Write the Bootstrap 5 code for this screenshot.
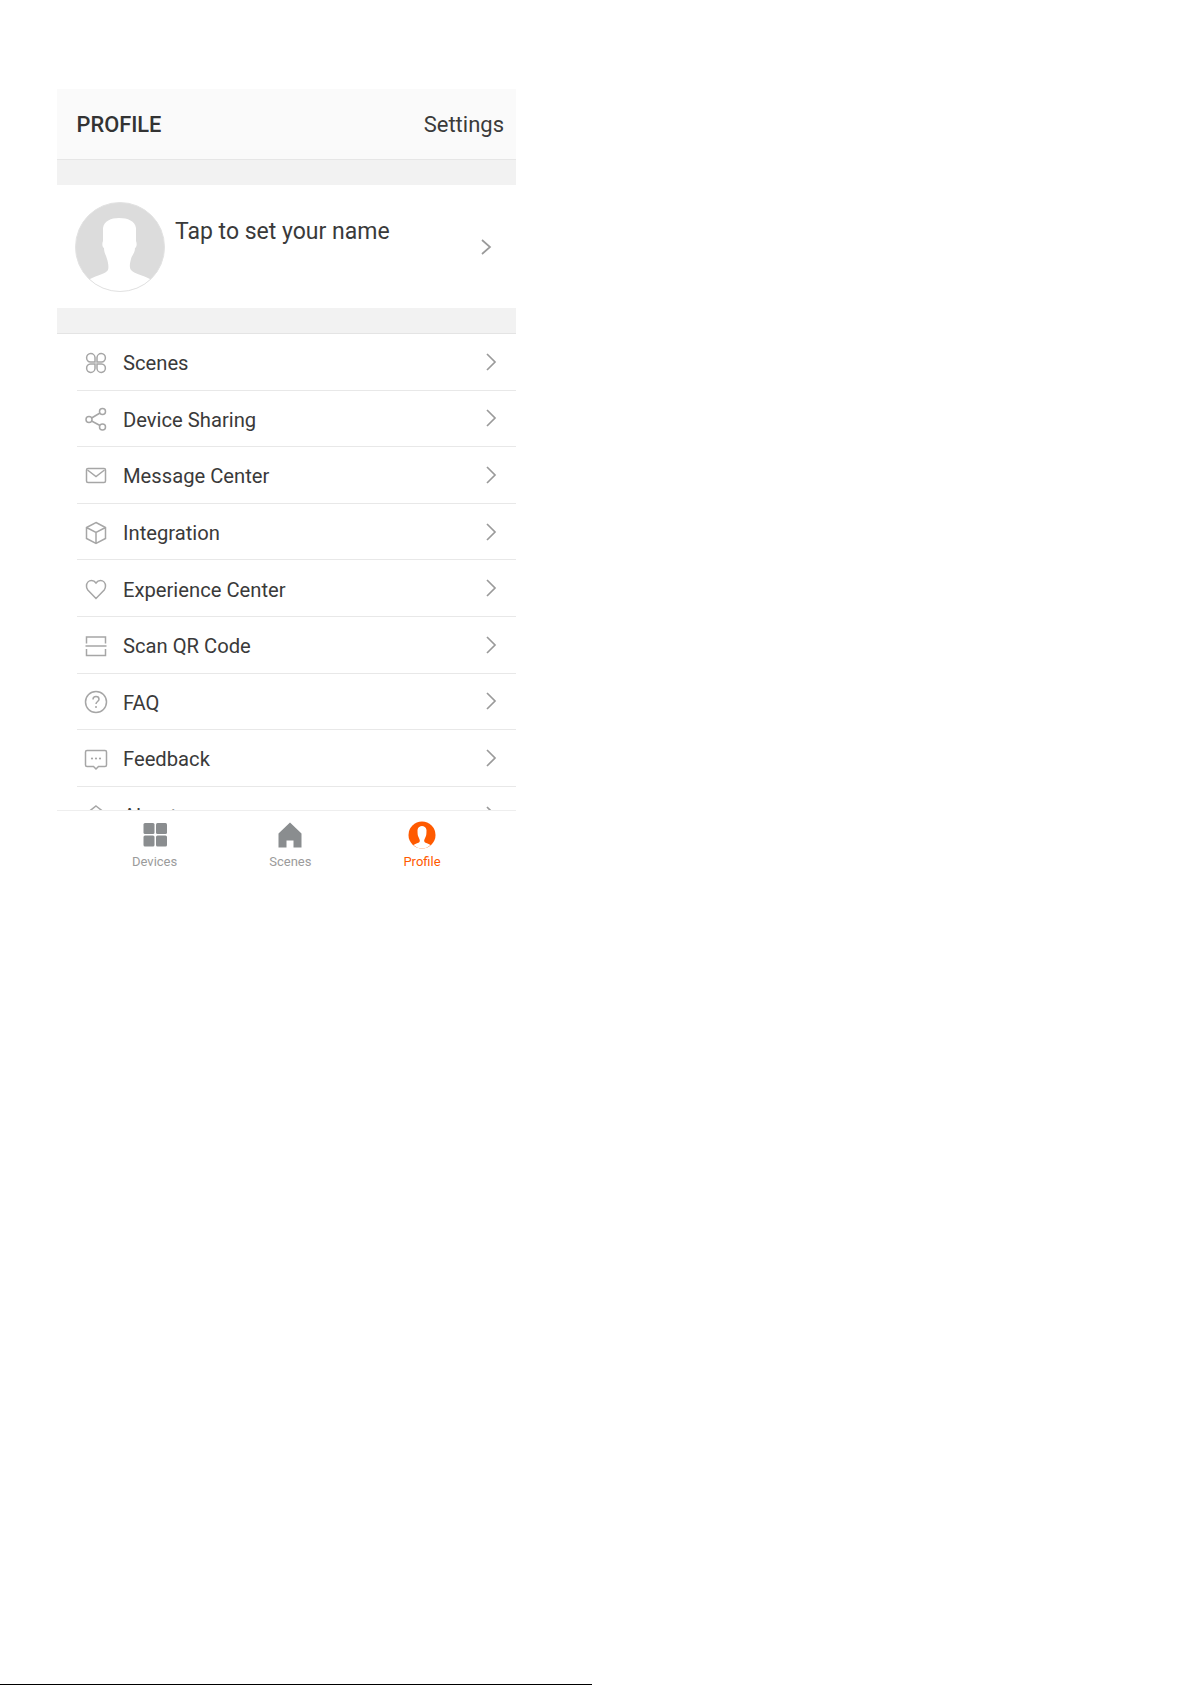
<!DOCTYPE html>
<html lang="en">
<head>
<meta charset="utf-8">
<title>Profile</title>
<link href="https://cdn.jsdelivr.net/npm/bootstrap@5.3.0/dist/css/bootstrap.min.css" rel="stylesheet">
<style>
html,body{margin:0;background:#fff}
body{font-family:Roboto,"Liberation Sans",sans-serif;color:#333}
.page-wrap{height:1685px;overflow:hidden}
.phone{width:459px;margin:89px 0 0 57px}
.app-head{height:71px;background:#fafafa;border-bottom:1px solid #e6e6e6;padding:3px 12px 0 19.500px}
.app-title{font-size:21.800px;font-weight:500;color:#333}
.app-settings{font-size:22px;color:#3a3a3a;margin-top:-2px}
.band{height:25px;background:#f2f2f2}
.who{height:123px;padding:17px 24px 0 18px;background:#fff}
.who-name{font-size:23px;line-height:27px;margin:16px 0 0 10px;color:#3a3a3a}
.who svg.pic{width:90px;height:90px;flex:none}
.who .chev{margin-top:36px}
.menu-clip{height:477px;overflow:hidden;border-top:1px solid #e4e4e4}
.menu-clip .list-group-item{border:0;border-bottom:1px solid #e8e8e8;border-radius:0;height:56.6px;margin-left:20px;padding:0 19.500px 0 7px;background:#fff;color:#3a3a3a;font-size:20.200px;gap:15px}
.row-label{padding-top:3px}
.ico{width:24px;height:24px;flex:none;fill:none;stroke:#a6a6a6;stroke-width:1.5;margin-top:2px}
.chev{width:12px;height:18px;flex:none;fill:none;stroke:#9a9a9a;stroke-width:1.7}
.tabbar{height:70px;border-top:1px solid #eeeeee;padding:10px 0 0 75px;gap:92px;background:#fff}
.tab-item{font-size:13px;line-height:15px;color:#9b9b9b;gap:5px}
.tab-item svg{width:28px;height:28px;display:block}
.tab-on{color:#ff5a00}
.base-rule{width:592px;height:1px;background:#000}
</style>
</head>
<body>
<div class="page-wrap d-flex flex-column">
  <div class="phone">
    <div class="app-head d-flex align-items-center justify-content-between">
      <span class="app-title">PROFILE</span>
      <span class="app-settings">Settings</span>
    </div>
    <div class="band"></div>
    <div class="who d-flex">
      <svg class="pic" viewBox="0 0 90 90"><defs><clipPath id="cp"><circle cx="45" cy="45" r="44.5"/></clipPath></defs><circle cx="45" cy="45" r="44.5" fill="#dcdcdc"/><path clip-path="url(#cp)" fill="#fff" d="M15 77C22 73 31 72 33 68C34 65 33 60 32 57C31 53 29 51 29 46C27 45 27 41 28 39V26C29 19 36 16 44 16C53 16 60 19 61 26V39C62 41 62 45 60 46C60 51 57 53 56 57C55 61 54 65 56 68C59 72 68 73 75 77V92H15Z"/><circle cx="45" cy="45" r="44.5" fill="none" stroke="#e2e2e2"/></svg>
      <div class="who-name flex-grow-1">Tap to set your name</div>
      <svg class="chev" viewBox="0 0 12 18"><path d="M2 2l8 7-8 7"/></svg>
    </div>
    <div class="band"></div>
    <div class="menu-clip">
      <div class="list-group list-group-flush">
        <div class="list-group-item d-flex align-items-center">
          <svg class="ico" viewBox="0 0 24 24"><path d="M11 11H6.500A4.200 4.200 0 1 1 11 6.500ZM13 11V6.500A4.200 4.200 0 1 1 17.500 11ZM11 13V17.500A4.200 4.200 0 1 1 6.500 13ZM13 13H17.500A4.200 4.200 0 1 1 13 17.500Z"/></svg>
          <span class="row-label flex-grow-1">Scenes</span>
          <svg class="chev" viewBox="0 0 12 18"><path d="M2 1l8 8-8 8"/></svg>
        </div>
        <div class="list-group-item d-flex align-items-center">
          <svg class="ico" viewBox="0 0 24 24"><circle cx="5" cy="12.500" r="3"/><circle cx="18.500" cy="4.500" r="3"/><circle cx="18.500" cy="20" r="3"/><path d="M7.600 11L16 6M7.600 14L16 18.500"/></svg>
          <span class="row-label flex-grow-1">Device Sharing</span>
          <svg class="chev" viewBox="0 0 12 18"><path d="M2 1l8 8-8 8"/></svg>
        </div>
        <div class="list-group-item d-flex align-items-center">
          <svg class="ico" viewBox="0 0 24 24"><rect x="2.500" y="4.500" width="19" height="14" rx="1.500"/><path d="M3.500 6l8.500 6.500L20.500 6"/></svg>
          <span class="row-label flex-grow-1">Message Center</span>
          <svg class="chev" viewBox="0 0 12 18"><path d="M2 1l8 8-8 8"/></svg>
        </div>
        <div class="list-group-item d-flex align-items-center">
          <svg class="ico" viewBox="0 0 24 24"><path d="M12 1.500l9.500 5v11L12 22.500l-9.500-5v-11zM2.500 6.500l9.500 5 9.500-5M12 11.500v11"/></svg>
          <span class="row-label flex-grow-1">Integration</span>
          <svg class="chev" viewBox="0 0 12 18"><path d="M2 1l8 8-8 8"/></svg>
        </div>
        <div class="list-group-item d-flex align-items-center">
          <svg class="ico" viewBox="0 0 24 24"><path d="M12 21.500L3.800 13A5.600 5.600 0 0 1 2.500 9C2.500 5.500 5 3.500 7.500 3.500C9.500 3.500 11 4.500 12 6C13 4.500 14.500 3.500 16.500 3.500C19 3.500 21.500 5.500 21.500 9C21.500 10.500 21 12 20.200 13Z"/></svg>
          <span class="row-label flex-grow-1">Experience Center</span>
          <svg class="chev" viewBox="0 0 12 18"><path d="M2 1l8 8-8 8"/></svg>
        </div>
        <div class="list-group-item d-flex align-items-center">
          <svg class="ico" viewBox="0 0 24 24"><path d="M2.500 9.500V3h19v6.500M1.500 12h21M2.500 15v6.500h19V15"/></svg>
          <span class="row-label flex-grow-1">Scan QR Code</span>
          <svg class="chev" viewBox="0 0 12 18"><path d="M2 1l8 8-8 8"/></svg>
        </div>
        <div class="list-group-item d-flex align-items-center">
          <svg class="ico" viewBox="0 0 24 24"><circle cx="12" cy="12" r="10.500"/><path d="M9 9.500C9 7.500 10.500 6.500 12 6.500C13.700 6.500 15 7.700 15 9.200C15 11.500 12 11.500 12 14"/><circle cx="12" cy="17" r="1" fill="#a6a6a6" stroke="none"/></svg>
          <span class="row-label flex-grow-1">FAQ</span>
          <svg class="chev" viewBox="0 0 12 18"><path d="M2 1l8 8-8 8"/></svg>
        </div>
        <div class="list-group-item d-flex align-items-center">
          <svg class="ico" viewBox="0 0 24 24"><path d="M3 3.500H21A1.500 1.500 0 0 1 22.500 5V18A1.500 1.500 0 0 1 21 19.500H14.500L12 22L9.500 19.500H3A1.500 1.500 0 0 1 1.500 18V5A1.500 1.500 0 0 1 3 3.500Z"/><circle cx="8" cy="11.500" r="1.100" fill="#a6a6a6" stroke="none"/><circle cx="12" cy="11.500" r="1.100" fill="#a6a6a6" stroke="none"/><circle cx="16" cy="11.500" r="1.100" fill="#a6a6a6" stroke="none"/></svg>
          <span class="row-label flex-grow-1">Feedback</span>
          <svg class="chev" viewBox="0 0 12 18"><path d="M2 1l8 8-8 8"/></svg>
        </div>
        <div class="list-group-item d-flex align-items-center">
          <svg class="ico" viewBox="0 0 24 24"><path d="M12 2l9 7v12H3V9z"/></svg>
          <span class="row-label flex-grow-1">About</span>
          <svg class="chev" viewBox="0 0 12 18"><path d="M2 1l8 8-8 8"/></svg>
        </div>
      </div>
    </div>
    <div class="tabbar d-flex">
      <div class="tab-item d-flex flex-column align-items-center">
        <svg viewBox="0 0 28 28"><g fill="#8a8d8f"><rect x="2.500" y="2" width="11" height="11" rx="1.500"/><rect x="15" y="2" width="11" height="11" rx="1.500"/><rect x="2.500" y="14.500" width="11" height="11" rx="1.500"/><rect x="15" y="14.500" width="11" height="11" rx="1.500"/></g></svg>
        <span>Devices</span>
      </div>
      <div class="tab-item d-flex flex-column align-items-center">
        <svg viewBox="0 0 28 28"><path fill="#8a8d8f" d="M14 1.500L25.500 12.500V26.500H17.500V19.500H10.500V26.500H2.500V12.500Z"/></svg>
        <span>Scenes</span>
      </div>
      <div class="tab-item tab-on d-flex flex-column align-items-center">
        <svg viewBox="0 0 28 28"><circle cx="14" cy="14" r="13.500" fill="#ff5a00"/><path fill="#fff" d="M5.500 24C8 22.500 10.500 22 11.500 21C12.500 19.500 11 17.500 10.500 16C9.800 15 9.500 13 9.500 9C10 6 12 5 14 5C16 5 18 6 18.500 9C18.500 13 18.200 15 17.500 16C17 17.500 15.500 19.500 16.500 21C17.500 22 20 22.500 22.500 24C20 26.500 17 27.500 14 27.500C11 27.500 8 26.500 5.500 24Z"/></svg>
        <span>Profile</span>
      </div>
    </div>
  </div>
  <div class="base-rule mt-auto"></div>
</div>
<script src="https://cdn.jsdelivr.net/npm/bootstrap@5.3.0/dist/js/bootstrap.bundle.min.js"></script>
</body>
</html>
